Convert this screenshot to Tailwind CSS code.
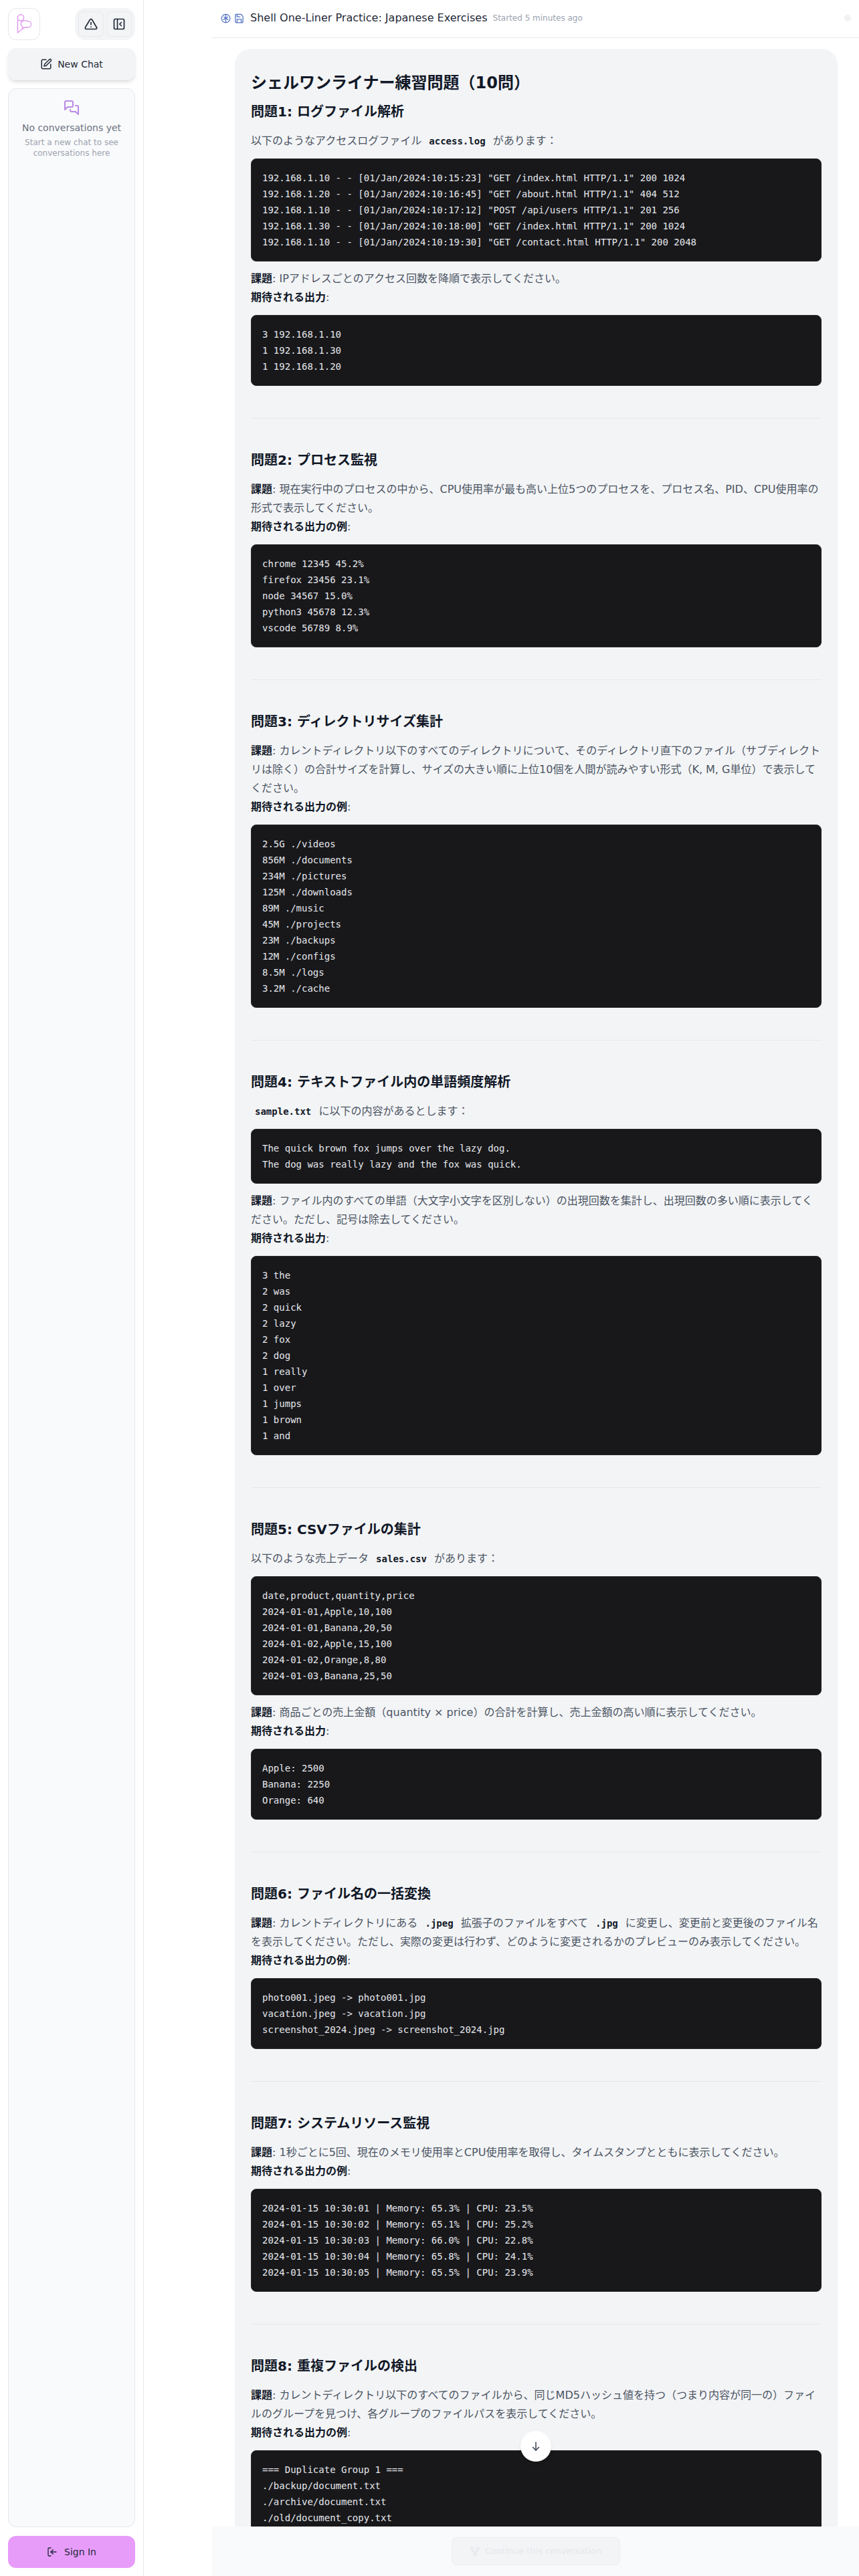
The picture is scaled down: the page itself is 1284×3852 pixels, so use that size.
<!DOCTYPE html>
<html lang="ja">
<head>
    <meta charset="UTF-8">
    <title>Shell One-Liner Practice: Japanese Exercises</title>
    <script src="https://cdn.jsdelivr.net/npm/@tailwindcss/browser@4"></script>
</head>
<body class="bg-white font-['DejaVu_Sans','Noto_Sans_CJK_JP',sans-serif]">
<div class="flex h-[3852px] overflow-hidden">

    <!-- Sidebar -->
    <aside class="w-[215px] shrink-0 border-r border-[#e5e7eb] p-3 flex flex-col">
        <div class="flex justify-between">
            <div class="w-[48px] h-[48px] rounded-xl border border-[#e5e7eb] flex items-center justify-center">
                <svg class="w-[22px] h-[30px]" viewBox="0 0 22 30" fill="none" stroke="#e2a3f0" stroke-width="1.6" stroke-linejoin="round"><circle cx="6" cy="5.5" r="4.6"/><path d="M1.4 8v20l6.6-5.5"/><path d="M8 22.5l1-3.2a5.6 5 0 0 1 6-8.8h1.5a5 4.6 0 0 1 0 9.4H12z"/></svg>
            </div>
            <div class="w-[90px] h-[48px] rounded-2xl bg-[#f3f4f6] p-[5px] flex gap-[4px]">
                <div class="flex-1 rounded-md border border-[#e9eaed] flex items-center justify-center">
                    <svg class="w-[20px] h-[20px]" viewBox="0 0 24 24" fill="none" stroke="#1f2937" stroke-width="2" stroke-linecap="round" stroke-linejoin="round"><path d="M10.3 3.9 1.8 18a2 2 0 0 0 1.7 3h17a2 2 0 0 0 1.7-3L13.7 3.9a2 2 0 0 0-3.4 0z"/><path d="M12 9v4"/><path d="M12 17h.01"/></svg>
                </div>
                <div class="flex-1 rounded-md border border-[#e9eaed] flex items-center justify-center">
                    <svg class="w-[20px] h-[20px]" viewBox="0 0 24 24" fill="none" stroke="#1f2937" stroke-width="2" stroke-linecap="round" stroke-linejoin="round"><rect x="3" y="3" width="18" height="18" rx="2"/><path d="M9 3v18"/><path d="m16 15-3-3 3-3"/></svg>
                </div>
            </div>
        </div>
        <div class="mt-[12px] h-[48px] rounded-xl bg-[#f3f4f6] shadow-md flex items-center justify-center gap-[8px] text-[14px] text-[#1f2937]">
            <svg class="w-[18px] h-[18px]" viewBox="0 0 24 24" fill="none" stroke="#1f2937" stroke-width="2" stroke-linecap="round" stroke-linejoin="round"><path d="M12 3H5a2 2 0 0 0-2 2v14a2 2 0 0 0 2 2h14a2 2 0 0 0 2-2v-7"/><path d="M18.4 2.6a2.1 2.1 0 0 1 3 3L12 15l-4 1 1-4z"/></svg>
            New Chat
        </div>
        <div class="mt-[12px] flex-1 rounded-xl border border-[#e5e7eb] bg-[#f9fafb] px-4 pt-[16px] text-center">
            <svg class="w-[24px] h-[24px] mx-auto" viewBox="0 0 24 24" fill="none" stroke="#b98ae6" stroke-width="2" stroke-linecap="round" stroke-linejoin="round"><path d="M14 9a2 2 0 0 1-2 2H6l-4 4V4a2 2 0 0 1 2-2h8a2 2 0 0 1 2 2z"/><path d="M18 9h2a2 2 0 0 1 2 2v11l-4-4h-6a2 2 0 0 1-2-2v-1"/></svg>
            <p class="mt-[8px] text-[14px] leading-[20px] text-[#6b7280]">No conversations yet</p>
            <p class="mt-[4px] text-[12px] leading-[16px] text-[#9ca3af]">Start a new chat to see conversations here</p>
        </div>
        <div class="mt-[13px] h-[48px] rounded-xl bg-[#e79cfa] flex items-center justify-center gap-[10px] text-[14px] text-[#1f2937]">
            <svg class="w-[16px] h-[16px]" viewBox="0 0 24 24" fill="none" stroke="#1f2937" stroke-width="2" stroke-linecap="round" stroke-linejoin="round"><path d="M9 21H5a2 2 0 0 1-2-2V5a2 2 0 0 1 2-2h4"/><path d="m14 17-5-5 5-5"/><path d="M9 12h12"/></svg>
            Sign In
        </div>
    </aside>

    <div class="w-[102px] shrink-0"></div>

    <!-- Conversation -->
    <main class="flex-1 relative overflow-hidden">
        <header class="h-[57px] border-b border-[#e5e7eb] pl-[13px] pr-[12px] pb-[2px] flex items-center gap-[5px]">
            <svg class="w-[15px] h-[15px]" viewBox="0 0 24 24" fill="none" stroke="#4f6fc4" stroke-width="2"><circle cx="12" cy="12" r="10"/><path d="M12 2v20"/><path d="M7 8l5 4 5-4"/><path d="M6 15l6-3 6 3"/></svg>
            <svg class="w-[15px] h-[15px]" viewBox="0 0 24 24" fill="none" stroke="#4f6fc4" stroke-width="2" stroke-linejoin="round"><path d="M5 2h11l5 5v13a2 2 0 0 1-2 2H5a2 2 0 0 1-2-2V4a2 2 0 0 1 2-2z"/><path d="M7 2v6h8"/><path d="M7 22v-8h10v8"/></svg>
            <h1 class="ml-[4px] text-[16px] text-[#1f2937]">Shell One-Liner Practice: Japanese Exercises</h1>
            <span class="ml-[3px] text-[12px] text-[#9ca3af]">Started 5 minutes ago</span>
            <span class="ml-auto w-[10px] h-[10px] rounded-full bg-[#f1f2f4]"></span>
        </header>

        <div class="ml-[34px] mr-[32px] mt-[16px] rounded-3xl bg-[#f3f4f6] px-6 pt-[35px] pb-10 text-[16px] leading-[28px] text-[#4b5563]
            [&_h2]:text-[24px] [&_h2]:leading-[32px] [&_h2]:font-bold [&_h2]:text-[#111827]
            [&_h3]:text-[20px] [&_h3]:leading-[28px] [&_h3]:font-bold [&_h3]:text-[#111827] [&_h3]:mb-4
            [&_h2+h3]:mt-[13px]
            [&_strong]:font-bold [&_strong]:text-[#111827]
            [&_p]:mb-0
            [&_p_code]:font-['DejaVu_Sans_Mono',monospace] [&_p_code]:text-[14px] [&_p_code]:font-bold [&_p_code]:text-[#111827] [&_p_code]:px-[6px]
            [&_pre]:font-['DejaVu_Sans_Mono',monospace] [&_pre]:text-[14px] [&_pre]:leading-[24px] [&_pre]:text-[#e5e7eb] [&_pre]:bg-[#18181b] [&_pre]:border [&_pre]:border-[#27272a] [&_pre]:rounded-lg [&_pre]:p-4 [&_pre]:mt-3 [&_pre]:mb-3
            [&_hr]:border-[#e5e7eb] [&_hr]:mt-12 [&_hr]:mb-12">

            <h2>シェルワンライナー練習問題（10問）</h2>

            <h3>問題1: ログファイル解析</h3>
            <p>以下のようなアクセスログファイル <code>access.log</code> があります：</p>
            <pre>192.168.1.10 - - [01/Jan/2024:10:15:23] "GET /index.html HTTP/1.1" 200 1024
192.168.1.20 - - [01/Jan/2024:10:16:45] "GET /about.html HTTP/1.1" 404 512
192.168.1.10 - - [01/Jan/2024:10:17:12] "POST /api/users HTTP/1.1" 201 256
192.168.1.30 - - [01/Jan/2024:10:18:00] "GET /index.html HTTP/1.1" 200 1024
192.168.1.10 - - [01/Jan/2024:10:19:30] "GET /contact.html HTTP/1.1" 200 2048</pre>
            <p><strong>課題</strong>: IPアドレスごとのアクセス回数を降順で表示してください。<br><strong>期待される出力</strong>:</p>
            <pre>3 192.168.1.10
1 192.168.1.30
1 192.168.1.20</pre>
            <hr>

            <h3>問題2: プロセス監視</h3>
            <p><strong>課題</strong>: 現在実行中のプロセスの中から、CPU使用率が最も高い上位5つのプロセスを、プロセス名、PID、CPU使用率の形式で表示してください。<br><strong>期待される出力の例</strong>:</p>
            <pre>chrome 12345 45.2%
firefox 23456 23.1%
node 34567 15.0%
python3 45678 12.3%
vscode 56789 8.9%</pre>
            <hr>

            <h3>問題3: ディレクトリサイズ集計</h3>
            <p><strong>課題</strong>: カレントディレクトリ以下のすべてのディレクトリについて、そのディレクトリ直下のファイル（サブディレクトリは除く）の合計サイズを計算し、サイズの大きい順に上位10個を人間が読みやすい形式（K, M, G単位）で表示してください。<br><strong>期待される出力の例</strong>:</p>
            <pre>2.5G ./videos
856M ./documents
234M ./pictures
125M ./downloads
89M ./music
45M ./projects
23M ./backups
12M ./configs
8.5M ./logs
3.2M ./cache</pre>
            <hr>

            <h3>問題4: テキストファイル内の単語頻度解析</h3>
            <p><code>sample.txt</code> に以下の内容があるとします：</p>
            <pre>The quick brown fox jumps over the lazy dog.
The dog was really lazy and the fox was quick.</pre>
            <p><strong>課題</strong>: ファイル内のすべての単語（大文字小文字を区別しない）の出現回数を集計し、出現回数の多い順に表示してください。ただし、記号は除去してください。<br><strong>期待される出力</strong>:</p>
            <pre>3 the
2 was
2 quick
2 lazy
2 fox
2 dog
1 really
1 over
1 jumps
1 brown
1 and</pre>
            <hr>

            <h3>問題5: CSVファイルの集計</h3>
            <p>以下のような売上データ <code>sales.csv</code> があります：</p>
            <pre>date,product,quantity,price
2024-01-01,Apple,10,100
2024-01-01,Banana,20,50
2024-01-02,Apple,15,100
2024-01-02,Orange,8,80
2024-01-03,Banana,25,50</pre>
            <p><strong>課題</strong>: 商品ごとの売上金額（quantity × price）の合計を計算し、売上金額の高い順に表示してください。<br><strong>期待される出力</strong>:</p>
            <pre>Apple: 2500
Banana: 2250
Orange: 640</pre>
            <hr>

            <h3>問題6: ファイル名の一括変換</h3>
            <p><strong>課題</strong>: カレントディレクトリにある <code>.jpeg</code> 拡張子のファイルをすべて <code>.jpg</code> に変更し、変更前と変更後のファイル名を表示してください。ただし、実際の変更は行わず、どのように変更されるかのプレビューのみ表示してください。<br><strong>期待される出力の例</strong>:</p>
            <pre>photo001.jpeg -> photo001.jpg
vacation.jpeg -> vacation.jpg
screenshot_2024.jpeg -> screenshot_2024.jpg</pre>
            <hr>

            <h3>問題7: システムリソース監視</h3>
            <p><strong>課題</strong>: 1秒ごとに5回、現在のメモリ使用率とCPU使用率を取得し、タイムスタンプとともに表示してください。<br><strong>期待される出力の例</strong>:</p>
            <pre>2024-01-15 10:30:01 | Memory: 65.3% | CPU: 23.5%
2024-01-15 10:30:02 | Memory: 65.1% | CPU: 25.2%
2024-01-15 10:30:03 | Memory: 66.0% | CPU: 22.8%
2024-01-15 10:30:04 | Memory: 65.8% | CPU: 24.1%
2024-01-15 10:30:05 | Memory: 65.5% | CPU: 23.9%</pre>
            <hr>

            <h3>問題8: 重複ファイルの検出</h3>
            <p><strong>課題</strong>: カレントディレクトリ以下のすべてのファイルから、同じMD5ハッシュ値を持つ（つまり内容が同一の）ファイルのグループを見つけ、各グループのファイルパスを表示してください。<br><strong>期待される出力の例</strong>:</p>
            <pre>=== Duplicate Group 1 ===
./backup/document.txt
./archive/document.txt
./old/document_copy.txt
./temp/document_old.txt</pre>
        </div>

        <!-- Scroll down -->
        <div class="absolute left-[461px] top-[3635px] w-[46px] h-[46px] rounded-full bg-white shadow-md flex items-center justify-center">
            <svg class="w-[18px] h-[18px]" viewBox="0 0 24 24" fill="none" stroke="#374151" stroke-width="2" stroke-linecap="round" stroke-linejoin="round"><path d="M12 4v16"/><path d="m6 14 6 6 6-6"/></svg>
        </div>

        <!-- Continue bar -->
        <div class="absolute inset-x-0 bottom-0 h-[74px] bg-[#f9fafb] flex items-center justify-center">
            <div class="w-[252px] h-[42px] rounded-lg border border-[#eceef1] bg-[#f3f4f6] flex items-center justify-center gap-[7px] text-[13px] text-[#e5e7eb]">
                <svg class="w-[16px] h-[16px]" viewBox="0 0 24 24" fill="none" stroke="#e5e7eb" stroke-width="2" stroke-linecap="round"><circle cx="12" cy="18" r="3"/><circle cx="6" cy="6" r="3"/><circle cx="18" cy="6" r="3"/><path d="M18 9v2a2 2 0 0 1-2 2H8a2 2 0 0 1-2-2V9"/><path d="M12 13v2"/></svg>
                Continue this conversation
            </div>
        </div>
    </main>
</div>
</body>
</html>
